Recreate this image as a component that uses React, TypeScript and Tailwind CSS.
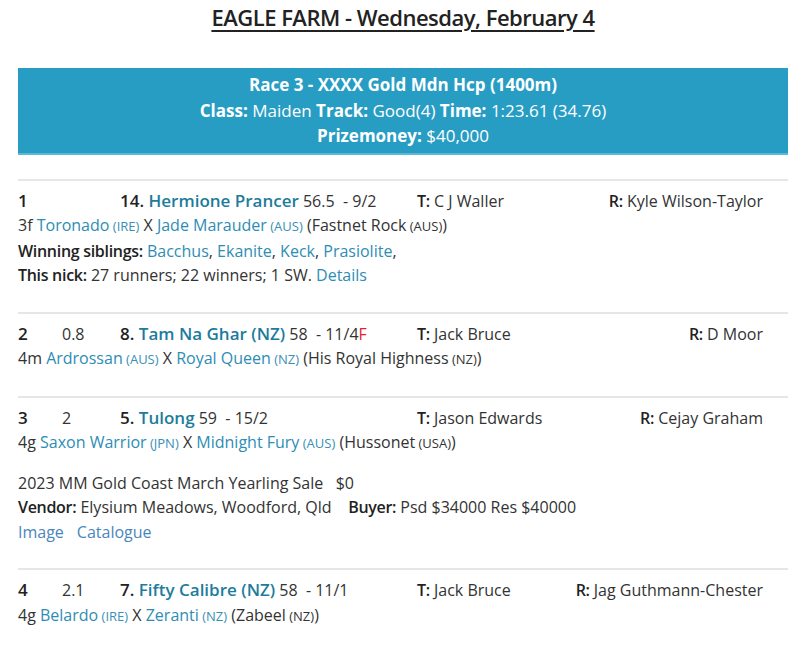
import React from "react";

type Link = { name: string; country?: string };

interface Runner {
  pos: string;
  margin: string;
  num: string;
  horse: string;
  horseCountry?: string;
  weight: string;
  price: string;
  fav?: boolean;
  trainer: string;
  rider: string;
  sex: string;
  sire: Link;
  dam: Link;
  damsire: Link;
  siblings?: string[];
  nick?: string;
  sale?: { title: string; price: string; vendor: string; buyer: string };
}

const runners: Runner[] = [
  {
    pos: "1",
    margin: "",
    num: "14.",
    horse: "Hermione Prancer",
    weight: "56.5",
    price: "9/2",
    trainer: "C J Waller",
    rider: "Kyle Wilson-Taylor",
    sex: "3f",
    sire: { name: "Toronado", country: "(IRE)" },
    dam: { name: "Jade Marauder", country: "(AUS)" },
    damsire: { name: "Fastnet Rock", country: "(AUS)" },
    siblings: ["Bacchus", "Ekanite", "Keck", "Prasiolite"],
    nick: "27 runners; 22 winners; 1 SW.",
  },
  {
    pos: "2",
    margin: "0.8",
    num: "8.",
    horse: "Tam Na Ghar",
    horseCountry: "(NZ)",
    weight: "58",
    price: "11/4",
    fav: true,
    trainer: "Jack Bruce",
    rider: "D Moor",
    sex: "4m",
    sire: { name: "Ardrossan", country: "(AUS)" },
    dam: { name: "Royal Queen", country: "(NZ)" },
    damsire: { name: "His Royal Highness", country: "(NZ)" },
  },
  {
    pos: "3",
    margin: "2",
    num: "5.",
    horse: "Tulong",
    weight: "59",
    price: "15/2",
    trainer: "Jason Edwards",
    rider: "Cejay Graham",
    sex: "4g",
    sire: { name: "Saxon Warrior", country: "(JPN)" },
    dam: { name: "Midnight Fury", country: "(AUS)" },
    damsire: { name: "Hussonet", country: "(USA)" },
    sale: {
      title: "2023 MM Gold Coast March Yearling Sale",
      price: "$0",
      vendor: "Elysium Meadows, Woodford, Qld",
      buyer: "Psd $34000 Res $40000",
    },
  },
  {
    pos: "4",
    margin: "2.1",
    num: "7.",
    horse: "Fifty Calibre",
    horseCountry: "(NZ)",
    weight: "58",
    price: "11/1",
    trainer: "Jack Bruce",
    rider: "Jag Guthmann-Chester",
    sex: "4g",
    sire: { name: "Belardo", country: "(IRE)" },
    dam: { name: "Zeranti", country: "(NZ)" },
    damsire: { name: "Zabeel", country: "(NZ)" },
  },
];

function Country({ c, link }: { c?: string; link?: boolean }) {
  if (!c) return null;
  return (
    <span className={`text-[13px] ${link ? "text-[#3a8fb5]" : "text-[#333]"}`}> {c}</span>
  );
}

function Label({ children }: { children: React.ReactNode }) {
  return <span className="font-semibold text-[#222] tracking-[-0.3px]">{children}</span>;
}

function RunnerBlock({ r }: { r: Runner }) {
  return (
    <div className="border-t-2 border-[#e6e6e6] pt-[8px] pb-[24px] leading-[24.5px]">
      {/* Main row */}
      <div className="flex items-baseline pr-[25px]">
        <div className="w-[44px] text-[17px] font-semibold text-[#222]">{r.pos}</div>
        <div className="w-[58px] text-[16px] text-[#333]">{r.margin}</div>
        <div className="w-[297px] whitespace-nowrap">
          <span className="text-[17px] font-semibold text-[#222]">{r.num} </span>
          <span className="text-[17px] font-semibold text-[#1d7c9c]">
            {r.horse}
            {r.horseCountry && ` ${r.horseCountry}`}
          </span>
          <span className="text-[16px] text-[#333]">
            {" "}
            {r.weight}&nbsp;&nbsp;- {r.price}
          </span>
          {r.fav && <span className="text-[16px] text-[#e8202a]">F</span>}
        </div>
        <div className="text-[16px] text-[#333] whitespace-nowrap">
          <Label>T:</Label> {r.trainer}
        </div>
        <div className="flex-1 text-right text-[16px] text-[#333] whitespace-nowrap">
          <Label>R:</Label> {r.rider}
        </div>
      </div>

      {/* Pedigree */}
      <div className="text-[16px] text-[#333]">
        {r.sex} <span className="text-[#2e8db4]">{r.sire.name}</span>
        <Country c={r.sire.country} link /> X{" "}
        <span className="text-[#2e8db4]">{r.dam.name}</span>
        <Country c={r.dam.country} link /> ({r.damsire.name}
        <Country c={r.damsire.country} />)
      </div>

      {r.siblings && (
        <div className="text-[16px] text-[#333]">
          <Label>Winning siblings:</Label>{" "}
          {r.siblings.map((s) => (
            <span key={s}>
              <span className="text-[#2e8db4]">{s}</span>,{" "}
            </span>
          ))}
        </div>
      )}

      {r.nick && (
        <div className="text-[16px] text-[#333]">
          <Label>This nick:</Label> {r.nick}{" "}
          <span className="text-[#2e8db4]">Details</span>
        </div>
      )}

      {r.sale && (
        <div className="mt-[15px] text-[16px] text-[#333]">
          <div>
            {r.sale.title}&nbsp;&nbsp;&nbsp;{r.sale.price}
          </div>
          <div>
            <Label>Vendor:</Label> {r.sale.vendor}
            &nbsp;&nbsp;&nbsp;&nbsp;
            <Label>Buyer:</Label> {r.sale.buyer}
          </div>
          <div className="flex gap-[13px] text-[#4a86bd]">
            <span>Image</span>
            <span>Catalogue</span>
          </div>
        </div>
      )}
    </div>
  );
}

export default function App() {
  return (
    <div className="min-h-[654px] bg-white pl-[18px] pr-[12px] pt-[2px] font-['Open_Sans',sans-serif] text-[#333]">
      <h1 className="text-center text-[22px] font-semibold text-[#222] underline underline-offset-[4px] leading-[30px] tracking-[-0.5px]">
        EAGLE FARM - Wednesday, February 4
      </h1>

      {/* Race header */}
      <div className="mt-[36px] bg-[#279dc4] py-[4px] text-center text-[17px] leading-[25.5px] text-white border-b-2 border-[#5ab8d8]">
        <div className="font-bold">Race 3 - XXXX Gold Mdn Hcp (1400m)</div>
        <div>
          <span className="font-bold">Class:</span> Maiden{" "}
          <span className="font-bold">Track:</span> Good(4){" "}
          <span className="font-bold">Time:</span> 1:23.61 (34.76)
        </div>
        <div>
          <span className="font-bold">Prizemoney:</span> $40,000
        </div>
      </div>

      <div className="mt-[24px]">
        {runners.map((r) => (
          <RunnerBlock key={r.pos} r={r} />
        ))}
      </div>
    </div>
  );
}
